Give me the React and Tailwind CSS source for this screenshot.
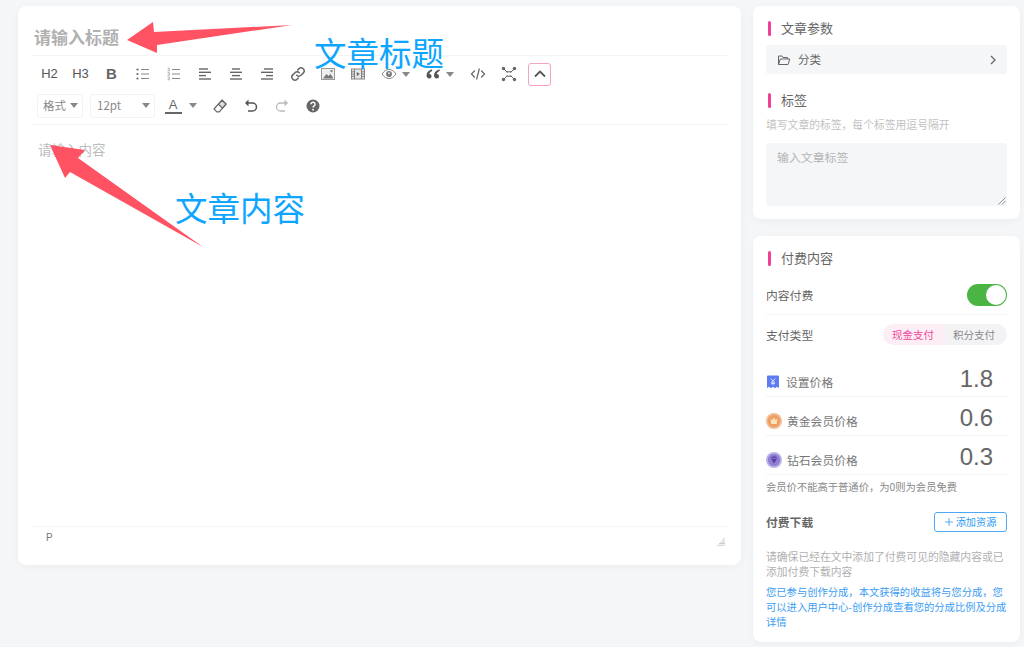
const cjk = { fontFamily: '"Noto Sans CJK SC", "Noto Sans", sans-serif' };

function S({ w = 16, h = 16, vb = "0 0 16 16", children, className = "" }) {
  return (
    <svg width={w} height={h} viewBox={vb} fill="none" className={className}>
      {children}
    </svg>
  );
}
const c = "#666";

const Lines = ({ rows }) => (
  <S>
    {rows.map(([x1, x2, y], i) => (
      <path key={i} d={`M${x1} ${y}H${x2}`} stroke={c} strokeWidth="1.4" />
    ))}
  </S>
);

const icons = {
  ul: (
    <S>
      {[3.5, 8, 12.5].map((y) => (
        <g key={y}>
          <circle cx="2.5" cy={y} r="1.1" fill={c} />
          <path d={`M6 ${y}H14`} stroke="#888" strokeWidth="1" />
        </g>
      ))}
    </S>
  ),
  ol: (
    <S>
      {[3.5, 8, 12.5].map((y) => (
        <g key={y}>
          <path d={`M1.5 ${y - 1.3}h1.8v2.6h-1.8`} stroke="#888" strokeWidth=".7" />
          <path d={`M6 ${y}H14`} stroke="#888" strokeWidth="1" />
        </g>
      ))}
    </S>
  ),
  left: <Lines rows={[[2, 11, 3], [2, 14, 6.3], [2, 9, 9.6], [2, 14, 13]]} />,
  center: <Lines rows={[[4, 12, 3], [2, 14, 6.3], [4, 12, 9.6], [2, 14, 13]]} />,
  right: <Lines rows={[[5, 14, 3], [2, 14, 6.3], [7, 14, 9.6], [2, 14, 13]]} />,
  link: (
    <S>
      <g stroke={c} strokeWidth="1.5" strokeLinecap="round">
        <path d="M6.7 9.3a3 3 0 0 0 4.3 0l2.2-2.2a3 3 0 0 0-4.3-4.3L7.8 3.9" />
        <path d="M9.3 6.7a3 3 0 0 0-4.3 0L2.8 8.9a3 3 0 0 0 4.3 4.3l1.1-1.1" />
      </g>
    </S>
  ),
  image: (
    <S>
      <rect x="1.5" y="2.5" width="13" height="11" fill="#eee" stroke="#999" strokeWidth="1" />
      <path d="M3 12.500l3.500-4.500 2 2 2-2 3 4.500z" fill="#777" />
      <circle cx="11.500" cy="5" r="1.200" fill="#888" />
    </S>
  ),
  video: (
    <S>
      <rect x="1.500" y="3" width="13" height="10" fill="#e4e4e4" stroke="#888" strokeWidth="1" />
      <path d="M4.500 3v10M11.500 3v10M1.500 5.800h3M1.500 8h3M1.500 10.300h3M11.500 5.800h3M11.500 8h3M11.500 10.300h3" stroke="#777" strokeWidth=".9" />
      <path d="M6.800 6v4L9.800 8z" fill="#666" />
    </S>
  ),
  eye: (
    <S>
      <path d="M1 8c2-3 4.400-4.500 7-4.500s5 1.500 7 4.500c-2 3-4.400 4.500-7 4.500S3 11 1 8z" stroke="#888" strokeWidth="1" />
      <circle cx="8" cy="8" r="2.900" fill="#777" />
      <circle cx="8" cy="7.200" r="1" fill="#eee" />
    </S>
  ),
  quote: (
    <S>
      <path d="M7 3.200C3.800 4.200 1.500 6.200 1.500 9.300c0 2 1.100 3.200 2.600 3.200 1.400 0 2.400-1 2.400-2.300 0-1.300-.9-2.200-2.200-2.200.2-1.300 1.300-2.500 2.900-3.100zM14.500 3.200c-3.200 1-5.500 3-5.500 6.100 0 2 1.100 3.200 2.600 3.200 1.400 0 2.400-1 2.400-2.300 0-1.300-.9-2.200-2.200-2.200.2-1.300 1.300-2.500 2.900-3.100z" fill="#555" />
    </S>
  ),
  code: (
    <S>
      <path d="M4.800 4.500 1.500 8l3.300 3.500M11.200 4.500 14.500 8l-3.300 3.500M9.400 2.500 6.600 13.500" stroke={c} strokeWidth="1.200" />
    </S>
  ),
  full: (
    <S>
      <path d="M3 3l10 10M13 3 3 13" stroke="#666" strokeWidth="1" />
      <path d="M5.500 6.600h5v2.800h-5z" fill="#fff" />
      <path d="M5 5.800h6M5 10.200h6" stroke="#666" strokeWidth="1.100" />
      {[[2.5, 2.5], [13.5, 2.5], [2.5, 13.5], [13.5, 13.5]].map(([x, y]) => (
        <circle key={x + "-" + y} cx={x} cy={y} r="1.700" fill="#666" />
      ))}
    </S>
  ),
  up: (
    <S>
      <path d="M3 10.500 8 5.500l5 5" stroke="#555" strokeWidth="1.800" />
    </S>
  ),
  eraser: (
    <S>
      <path d="M10 2.200 14 6l-6.700 7.800H4.800L2 11z" stroke="#666" strokeWidth="1.200" strokeLinejoin="round" />
      <path d="M10 2.200 14 6l-3.600 4.100-4-3.800z" fill="#ddd" stroke="#666" strokeWidth="1.200" strokeLinejoin="round" />
    </S>
  ),
  undo: (
    <S>
      <path d="M5.500 1.500 2 5l3.500 3.500V1.500z" fill="#555" />
      <path d="M4 5h5.500a4 4 0 0 1 0 8H5" stroke="#555" strokeWidth="1.500" />
    </S>
  ),
  redo: (
    <S>
      <path d="M10.500 1.500 14 5l-3.500 3.500V1.500z" fill="#bbb" />
      <path d="M12 5H6.500a4 4 0 0 0 0 8H11" stroke="#bbb" strokeWidth="1.300" />
    </S>
  ),
  help: (
    <S>
      <circle cx="8" cy="8" r="6.500" fill="#666" />
      <path d="M5.900 6.300a2.100 2 0 1 1 3.300 1.600c-.8.600-1.200.9-1.200 1.700" stroke="#fff" strokeWidth="1.400" />
      <circle cx="8" cy="11.700" r=".9" fill="#fff" />
    </S>
  ),
};

const Caret = ({ className = "" }) => (
  <svg width="8" height="5" viewBox="0 0 8 5" className={className}>
    <path d="M0 0h8L4 5z" fill="#888" />
  </svg>
);

function Btn({ children, narrow }) {
  return (
    <div className={`flex h-[24px] items-center justify-center ${narrow ? "w-[30px]" : "w-[31px]"}`}>
      {children}
    </div>
  );
}

function Heading({ children }) {
  return (
    <div className="flex items-center gap-[10px] px-[2px]">
      <span className="h-[15px] w-[3px] rounded-full bg-[#f03f97]" />
      <span className="text-[13px] leading-[16px] text-[#666]">{children}</span>
    </div>
  );
}

function PriceRow({ icon, label, value, gap }) {
  return (
    <div className="flex h-[39px] items-end justify-between border-b border-[#f3f4f6] pr-[14px]">
      <div className={`flex items-center pb-[6px] ${gap}`}>
        {icon}
        <span className="text-[11.800px] leading-[16px] text-[#777]">{label}</span>
      </div>
      <span className="pb-[1px] text-[24px] leading-[32px] text-[#666]" style={{ fontFamily: '"Liberation Sans", sans-serif' }}>
        {value}
      </span>
    </div>
  );
}

const Ticket = () => (
  <svg width="14" height="14" viewBox="0 0 14 14">
    <path d="M1 1.500A1 1 0 0 1 2 .5h10a1 1 0 0 1 1 1V13l-2-1.300L9 13.200 7 11.800 5 13.200 3 11.700 1 13z" fill="#5d7cf2" />
    <path d="M4.800 3.500 7 6.200l2.200-2.700M7 6.200V10M5 7.100h4M5 8.600h4" stroke="#dfe8ff" strokeWidth=".9" fill="none" />
  </svg>
);
const Gold = () => (
  <svg width="16" height="16" viewBox="0 0 16 16">
    <circle cx="8" cy="8" r="8" fill="#f2bd92" />
    <circle cx="8" cy="8" r="6.200" fill="#ee9f63" />
    <path d="M4.500 5.500 6.300 7.300 8 4.500l1.700 2.800 1.800-1.800-.8 5.500H5.300z" fill="#fbe3bd" />
  </svg>
);
const Diamond = () => (
  <svg width="16" height="16" viewBox="0 0 16 16">
    <circle cx="8" cy="8" r="8" fill="#bdb5ea" />
    <circle cx="8" cy="8" r="6.200" fill="#8f80d2" />
    <path d="M4.600 6.300 6 4.600h4l1.400 1.700L8 11.500z" fill="#5a3fa8" />
    <path d="M4.600 6.300h6.800" stroke="#a99be0" strokeWidth=".6" />
  </svg>
);

export default function App() {
  return (
    <div className="relative h-[647px] w-[1024px] overflow-hidden bg-[#f4f6f8]" style={cjk}>
      <div className="flex items-start gap-[12px] pl-[18px] pt-[6px]">
        {/* editor */}
        <main className="flex h-[559px] w-[723px] flex-col rounded-[8px] bg-white px-[14px] shadow-[0_2px_8px_rgba(0,0,0,0.04)]">
          <div className="flex h-[50px] items-center border-b border-[#f3f4f6] pl-[2px] pt-[13px] text-[17px] font-bold leading-[24px] text-[#b0b0b0]">
            请输入标题
          </div>
          <div className="flex items-center pl-[2px] pt-[6px] text-[#555]">
            <Btn><span className="text-[13px]" style={{ fontFamily: '"Liberation Sans"' }}>H2</span></Btn>
            <Btn><span className="text-[13px]" style={{ fontFamily: '"Liberation Sans"' }}>H3</span></Btn>
            <Btn><span className="text-[15px] font-bold text-[#666]" style={{ fontFamily: '"Liberation Sans"' }}>B</span></Btn>
            <Btn>{icons.ul}</Btn>
            <Btn>{icons.ol}</Btn>
            <Btn>{icons.left}</Btn>
            <Btn>{icons.center}</Btn>
            <Btn>{icons.right}</Btn>
            <Btn>{icons.link}</Btn>
            <Btn narrow>{icons.image}</Btn>
            <Btn narrow>{icons.video}</Btn>
            <div className="ml-[8px] flex w-[36px] items-center gap-[5px]">{icons.eye}<Caret /></div>
            <div className="ml-[8px] flex w-[35px] items-center gap-[5px]">{icons.quote}<Caret /></div>
            <div className="flex w-[35px] justify-center">{icons.code}</div>
            <div className="flex w-[28px] justify-center">{icons.full}</div>
            <div className="ml-[5px] flex h-[23px] w-[23px] items-center justify-center rounded-[3px] border border-[#f4a3c6]">{icons.up}</div>
          </div>
          <div className="flex h-[39px] items-center gap-[7px] border-b border-[#f3f4f6] pl-[5px] pt-[1px]">
            <div className="flex h-[24px] w-[46px] items-center justify-between rounded-[3px] border border-[#f3f3f3] pl-[5px] pr-[4px] text-[11.500px] text-[#888]">
              格式<Caret />
            </div>
            <div className="flex h-[24px] w-[65px] items-center justify-between rounded-[3px] border border-[#f3f3f3] pl-[6px] pr-[4px] text-[11.500px] text-[#888]">
              12pt<Caret />
            </div>
            <div className="ml-[1px] flex items-center gap-[6px]">
              <div className="flex w-[20px] flex-col items-center leading-none">
                <span className="text-[13px] leading-[15px] text-[#666]" style={{ fontFamily: '"Liberation Sans"' }}>A</span>
                <span className="h-[2px] w-[17px] bg-[#666]" />
              </div>
              <Caret />
            </div>
            <div className="ml-[8px] flex items-center gap-[15px]">
              {icons.eraser}
              {icons.undo}
              {icons.redo}
              {icons.help}
            </div>
          </div>
          <div className="flex-1 pl-[6px] pt-[14px] text-[13.500px] leading-[20px] text-[#bdbdbd]">请输入内容</div>
          <div className="flex h-[39px] items-start justify-between border-t border-[#f3f4f6] pl-[14px] pr-[2px] pt-[4px]">
            <span className="text-[10px] leading-[14px] text-[#777]" style={{ fontFamily: '"Liberation Sans"' }}>P</span>
            <svg width="9" height="9" viewBox="0 0 9 9" className="mt-[6px]">
              <path d="M8 1v1M6 3h3M4.500 5H9M3 6.500h6M1 8.200h8" stroke="#ccc" strokeWidth="1" />
            </svg>
          </div>
        </main>

        {/* side */}
        <aside className="flex w-[267px] flex-col gap-[17px]">
          <section className="h-[213px] rounded-[8px] bg-white px-[13px] pt-[14px] shadow-[0_2px_8px_rgba(0,0,0,0.04)]">
            <Heading>文章参数</Heading>
            <div className="mt-[9px] flex h-[29px] items-center justify-between rounded-[3px] bg-[#f4f6f8] pl-[11px] pr-[10px] text-[11.500px] text-[#666]">
              <span className="flex items-center gap-[7px]">
                <svg width="14" height="14" viewBox="0 0 14 14" fill="none">
                  <path d="M1.500 11.500V3h3.500l1 1.500h4.500v1.500M1.500 11.500l1.800-5.500h9.500l-1.800 5.500z" stroke="#666" strokeWidth="1" strokeLinejoin="round" />
                </svg>
                分类
              </span>
              <svg width="8" height="10" viewBox="0 0 8 10" fill="none">
                <path d="M2 1l4 4-4 4" stroke="#666" strokeWidth="1.300" />
              </svg>
            </div>
            <div className="mt-[18px]"><Heading>标签</Heading></div>
            <p className="mt-[8px] text-[10.800px] leading-[16px] text-[#c2c2c2]">填写文章的标签，每个标签用逗号隔开</p>
            <div className="relative mt-[11px] h-[63px] rounded-[3px] bg-[#f4f6f8] pl-[11px] pt-[5px] text-[11.900px] leading-[18px] text-[#b5b5b5]">
              输入文章标签
              <svg width="8" height="8" viewBox="0 0 8 8" className="absolute bottom-[1px] right-[1px]">
                <path d="M0.500 7.500 7.500 0.500M4 7.500 7.500 4" stroke="#666" strokeWidth=".7" />
              </svg>
            </div>
          </section>

          <section className="h-[406px] rounded-[8px] bg-white px-[13px] pt-[14px] shadow-[0_2px_8px_rgba(0,0,0,0.04)]">
            <Heading>付费内容</Heading>
            <div className="mt-[9px] flex h-[40px] items-center justify-between border-b border-[#f3f4f6] text-[11.800px] text-[#666]">
              内容付费
              <span className="flex h-[22px] w-[40px] items-center justify-end rounded-full bg-[#4bb543] pr-[1px]">
                <span className="h-[20px] w-[20px] rounded-full bg-white" />
              </span>
            </div>
            <div className="flex h-[39px] items-center justify-between text-[11.800px] text-[#666]">
              支付类型
              <div className="flex h-[21px] w-[124px] overflow-hidden rounded-full text-[10.500px] leading-[21px]">
                <span className="w-[62px] bg-[#fdeef5] pl-[9px] text-[#f0479b]">现金支付</span>
                <span className="w-[62px] bg-[#f3f3f5] pl-[8px] text-[#888]">积分支付</span>
              </div>
            </div>
            <div className="mt-[4px]">
              <PriceRow icon={<Ticket />} label="设置价格" value="1.8" gap="gap-[6px]" />
              <PriceRow icon={<Gold />} label="黄金会员价格" value="0.6" gap="gap-[5px]" />
              <PriceRow icon={<Diamond />} label="钻石会员价格" value="0.3" gap="gap-[5px]" />
            </div>
            <p className="mt-[4px] text-[10.300px] leading-[15px] text-[#888]">会员价不能高于普通价，为0则为会员免费</p>
            <div className="mt-[16px] flex h-[24px] items-center justify-between">
              <span className="text-[11.800px] font-bold text-[#666]">付费下载</span>
              <span className="flex h-[20px] w-[73px] items-center justify-center gap-[3px] rounded-[3px] border border-[#4fa8f5] text-[10.200px] text-[#2f9bf2]">
                <svg width="8" height="8" viewBox="0 0 8 8"><path d="M4 0v8M0 4h8" stroke="#2f9bf2" strokeWidth=".8" /></svg>
                添加资源
              </span>
            </div>
            <p className="mt-[15px] text-[10.800px] leading-[15px] text-[#b0b0b0]">请确保已经在文中添加了付费可见的隐藏内容或已添加付费下载内容</p>
            <p className="mt-[5px] text-[10.300px] leading-[15px] text-[#3b9cf3]">您已参与创作分成，本文获得的收益将与您分成，您可以进入用户中心-创作分成查看您的分成比例及分成详情</p>
          </section>
        </aside>
      </div>

      {/* annotations drawn on top of the screenshot */}
      <svg className="pointer-events-none absolute left-0 top-0" width="1024" height="647" viewBox="0 0 1024 647">
        <path d="M127 40 153 22 154 32 292 25 157 45 157 53z" fill="#ff5364" />
        <path d="M50 145 85 150 78 158 203 247 70 172 65 178z" fill="#ff5364" />
      </svg>
      <span className="absolute left-[314px] top-[31px] text-[32.500px] leading-[42px] text-[#0ea5ff]">文章标题</span>
      <span className="absolute left-[175px] top-[186px] text-[32.500px] leading-[42px] text-[#0ea5ff]">文章内容</span>
    </div>
  );
}
